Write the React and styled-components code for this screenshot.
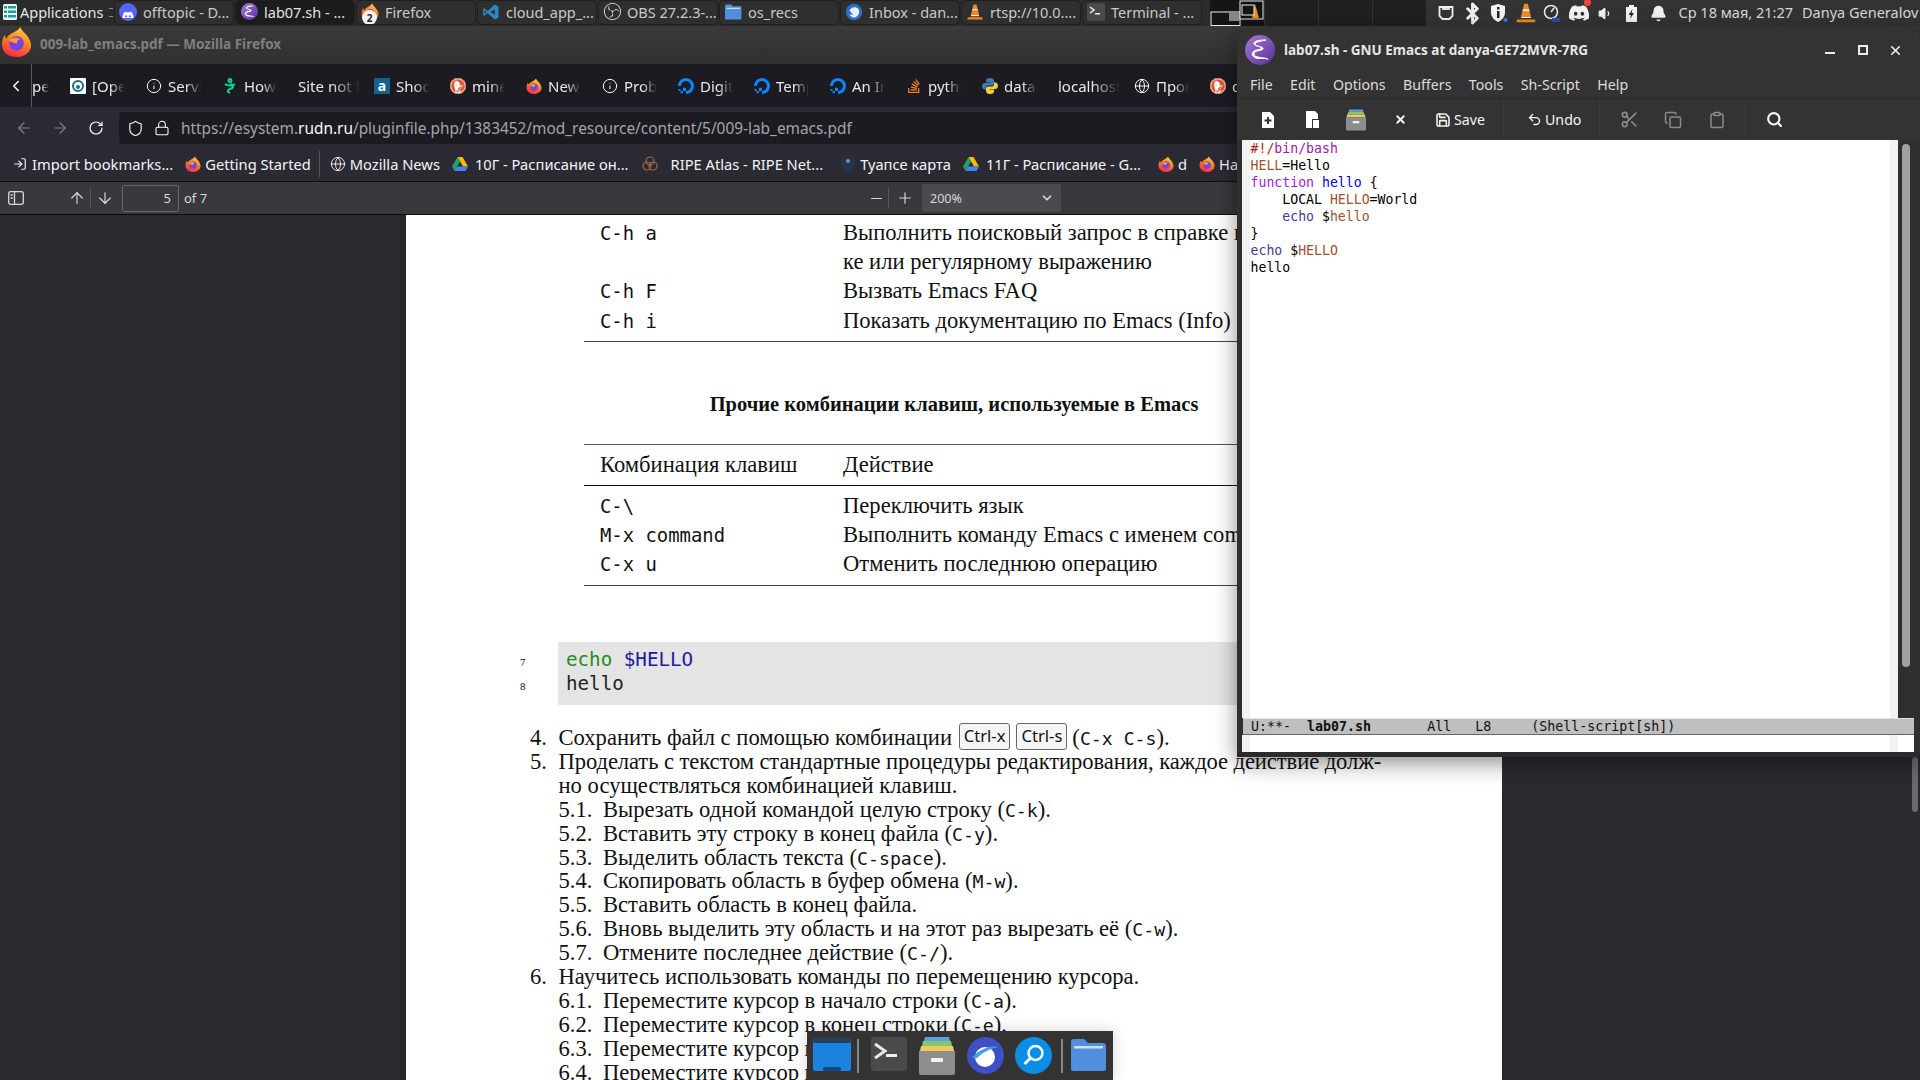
import React from "react";
import styled, { createGlobalStyle } from "styled-components";
import { Bluetooth, Bell, Volume1, Globe, Info, ArrowLeft, ArrowRight, RotateCw, Shield, Lock, ArrowUp, ArrowDown, Minus, Plus, ChevronDown, ChevronLeft, Undo2, Scissors, Copy, Clipboard, Search, X, Save, LogIn } from "lucide-react";
import { FaDiscord, FaStackOverflow } from "react-icons/fa";
import { SiObsstudio, SiDigitalocean, SiDuckduckgo } from "react-icons/si";

const GlobalStyle = createGlobalStyle`
  html, body { margin: 0; padding: 0; background: #2a2a2e; }
  body { font-family: "Noto Sans", sans-serif; overflow: hidden; }
  * { box-sizing: border-box; }
`;

const Screen = styled.div`
  position: relative; width: 1920px; height: 1080px; overflow: hidden;
  display: flex; flex-direction: column; background: #2a2a2e;
`;

/* ---------- top panel ---------- */
const Panel = styled.header`
  height: 26px; flex: none; display: flex; align-items: stretch; background: #2b2b2b; color: #e4e4e4;
`;
const AppMenu = styled.div`
  width: 114px; flex: none; display: flex; align-items: center; gap: 3px; padding: 0 0 2px 3px;
  font-size: 14.5px; white-space: nowrap; overflow: hidden;
`;
const MenuGrip = styled.span`
  width: 4px; height: 9px; margin-left: 3px; flex: none; border-top: 1px solid #888; border-bottom: 1px solid #888; position: relative;
`;
const TaskList = styled.div`
  display: flex; gap: 1px; width: 1090px; flex: none;
`;
const Task = styled.div`
  position: relative; width: 120px; height: 25px; flex: none; display: flex; align-items: center; gap: 6px; padding: 0 0 2px 4px;
  border-radius: 5px; border: 1px solid #1f1f1f; font-size: 14.5px; white-space: nowrap; overflow: hidden;
  background: ${p => (p.$active ? "#1c1c1c" : "#2f2f2f")}; color: ${p => (p.$active ? "#e4e4e4" : "#c9c9c9")};
`;
const TaskIcon = styled.span`
  width: 18px; height: 18px; flex: none; display: flex; align-items: center; justify-content: center;
`;
const Count = styled.span`
  position: absolute; left: 5px; top: 9px; width: 15px; height: 15px; border-radius: 50%;
  background: #f2f2f2; color: #222; font-size: 10px; font-weight: 700; display: flex; align-items: center; justify-content: center;
`;
const Pager = styled.div`
  width: 54px; flex: none; margin-left: 6px; background: #151515;
`;
const Desk = styled.div`
  width: 54px; flex: none; background: #202020; border-left: 1px solid #333;
`;
const Tray = styled.div`
  flex: 1; min-width: 0; background: #333; display: flex; align-items: center; padding-left: 7px; overflow: hidden; white-space: nowrap;
`;
const TrayIcon = styled.span`
  width: 26.5px; flex: none; height: 22px; display: flex; align-items: center; justify-content: center; color: #f0f0f0;
`;
const Clock = styled.span`
  font-size: 14.5px; color: #d8d8d8; margin-left: 7px; padding-bottom: 2px;
`;
const User = styled.span`
  font-size: 14.5px; color: #d8d8d8; margin-left: 9px; padding-bottom: 2px;
`;

/* ---------- firefox ---------- */
const Firefox = styled.main`
  flex: 1; min-height: 0; display: flex; flex-direction: column;
`;
const TitleBar = styled.div`
  position: relative; height: 38px; flex: none; background: linear-gradient(#3a3a3a, #303030);
  display: flex; align-items: center; padding-left: 40px;
  font-weight: 700; font-size: 13.5px; color: #7f7f7f; padding-bottom: 3px;
`;
const TitleLogo = styled.span`
  position: absolute; left: 1px; top: 0; width: 31px; height: 31px;
`;
const TabStrip = styled.div`
  height: 43px; flex: none; display: flex; background: #1c1b22; color: #fbfbfe; overflow: hidden;
`;
const TabBack = styled.div`
  width: 32px; flex: none; display: flex; align-items: center; justify-content: center; border-right: 1px solid #5a5a60; padding-left: 1px;
`;
const Tab = styled.div`
  flex: none; width: ${p => p.$w || 76}px; display: flex; align-items: center; gap: 6px; padding: 0 ${p => (p.$plain ? 6 : 13)}px 0 ${p => (p.$stub ? 0 : 8)}px; font-size: 15px; overflow: hidden;
`;
const TabLabel = styled.span`
  flex: 1; min-width: 0; overflow: hidden; white-space: nowrap; color: #e8e8ea;
  mask-image: linear-gradient(90deg, #000 55%, transparent 100%);
`;
const FavIcon = styled.span`
  width: 16px; height: 16px; flex: none; display: flex; align-items: center; justify-content: center;
`;
const SquareFav = styled.span`
  width: 16px; height: 16px; background: ${p => p.$bg}; color: ${p => p.$fg}; font-size: 14px; font-weight: 700; line-height: 15px; text-align: center; display: block;
`;
const NavBar = styled.div`
  height: 37px; flex: none; padding-top: 5px; background: #2b2a33; display: flex; align-items: center; color: #fbfbfe; border-top: 0;
`;
const NavButton = styled.span`
  width: 36px; height: 32px; flex: none; display: flex; align-items: center; justify-content: center; opacity: ${p => (p.$dim ? 0.4 : 1)};
`;
const NavGroup = styled.div`
  display: flex; padding-left: 6px; width: 119px; flex: none;
`;
const UrlField = styled.div`
  flex: 1; height: 32px; background: #1c1b22; border-radius: 4px 0 0 4px; display: flex; align-items: center; padding-left: 8px; gap: 10px;
`;
const Url = styled.span`
  font-size: 15.4px; color: #a4a4aa; white-space: nowrap; margin-left: 1px;
  b { color: #fbfbfe; font-weight: 400; }
`;
const BookmarkBar = styled.div`
  height: 38px; flex: none; background: #2b2a33; display: flex; align-items: center; padding: 3px 0 0 7px; overflow: hidden; white-space: nowrap;
  border-bottom: 1px solid #101014; color: #f4f4f6; font-size: 14.7px;
`;
const Bookmark = styled.span`
  display: flex; align-items: center; gap: ${p => p.$gap ?? 4}px; padding: 0 6px 0 ${p => p.$pl ?? 6}px; flex: none;
`;
const BookSep = styled.span`
  width: 1px; height: 26px; background: #55555a; margin: 0 4px 0 2px; flex: none;
`;
const PdfBar = styled.div`
  height: 33px; flex: none; background: #38383d; border-bottom: 1px solid #0c0c0d; display: flex; align-items: center; color: #d8d8da;
`;
const PdfButton = styled.span`
  width: ${p => p.$w || 24}px; height: 24px; flex: none; margin-left: ${p => p.$ml || 0}px; display: flex; align-items: center; justify-content: center;
`;
const PdfSep = styled.span`
  width: 1px; height: 20px; background: #55555a; flex: none;
`;
const PageInput = styled.div`
  width: 57px; height: 27px; border: 1px solid #67676b; background: #38383d; border-radius: 2px; font-size: 13px;
  display: flex; align-items: center; justify-content: flex-end; padding-right: 7px; margin-left: 3px; flex: none;
`;
const PageOf = styled.span`
  font-size: 13px; margin-left: 5px; flex: none; width: 680px;
`;
const Zoomer = styled.div`
  width: 139px; height: 28px; margin-left: 1px; background: #4a4a4f; border-radius: 2px; display: flex; align-items: center; justify-content: space-between;
  padding: 0 7px 0 8px; font-size: 12.5px; flex: none;
`;
const Viewer = styled.section`
  flex: 1; min-height: 0; display: flex; justify-content: flex-start; padding-left: 406px; overflow: hidden; background: #2a2a2e;
`;
const Page = styled.article`
  width: 1096px; height: 900px; background: #fff; padding-top: 3px; color: #111; flex: none;
  font-family: "Liberation Serif", serif; font-size: 22.6px; overflow: hidden;
`;
const DocTable = styled.div`
  margin: ${p => p.$mt || 0}px 0 0 178px; width: 760px;
  border-top: ${p => (p.$ruled ? "1.5px solid #555" : "0")};
  border-bottom: 1.5px solid #444; padding-bottom: 6px;
`;
const DocHead = styled.div`
  display: grid; grid-template-columns: 243px 1fr; height: 41px; align-items: center; padding-left: 16px; border-bottom: 1px solid #111; margin-bottom: 5px;
  white-space: nowrap;
`;
const DocRow = styled.div`
  display: grid; grid-template-columns: 243px 1fr; height: 29.3px; align-items: center; padding-left: 16px; white-space: nowrap;
`;
const Mono = styled.span`
  font-family: "DejaVu Sans Mono", monospace; font-size: ${p => p.$s || 18.9}px; white-space: pre;
`;
const DocHeading = styled.h3`
  margin: 47px 0 0; font-size: 20.5px; font-weight: 700; text-align: center; height: 30px; line-height: 30px;
`;
const CodeRow = styled.div`
  display: flex; margin: 56px 0 0 112px;
`;
const LineNums = styled.div`
  width: 40px; padding-top: 8px; padding-left: 2px; font-size: 11px; line-height: 24px;
`;
const CodeBlock = styled.pre`
  margin: 0; width: 800px; height: 63px; background: #e4e4e4; padding: 6px 8px; font-family: "DejaVu Sans Mono", monospace; font-size: 19.2px; line-height: 24px;
  color: #222;
`;
const CodeKey = styled.span` color: ${p => p.$c}; `;
const List = styled.div`
  margin: 21px 0 0 124px; line-height: 23.9px;
`;
const Item = styled.div`
  display: flex; height: 23.9px; white-space: nowrap; padding-left: ${p => (p.$sub ? 28.5 : 0)}px;
  letter-spacing: ${p => p.$ls || 0}px;
`;
const Num = styled.span`
  flex: none; width: ${p => (p.$sub ? 44.5 : 28.5)}px;
`;
const Kbd = styled.kbd`
  display: inline-block; height: 27px; line-height: 23px; margin: -3px 5px -3px 1px; padding: 0 4px; border: 1px solid #666; border-radius: 3px; background: #f6f6f6;
  font-family: "Noto Sans", sans-serif; font-size: 16.6px; vertical-align: top;
`;
const PageBar = styled.span`
  position: absolute; left: 1912px; top: 757px; width: 6px; height: 55px; border-radius: 3px; background: #6a6a6e;
`;

/* ---------- emacs ---------- */
const Emacs = styled.section`
  position: absolute; left: 1237px; top: 28px; width: 683px; height: 729px; background: #2f2f2f; border-radius: 11px 11px 0 0;
  box-shadow: 0 6px 22px rgba(0,0,0,.45); display: flex; flex-direction: column; overflow: hidden;
`;
const EmacsTitle = styled.div`
  height: 44px; flex: none; background: #333; display: flex; align-items: center; padding: 0 0 0 8px; color: #e6e6e6; font-weight: 700; font-size: 13.5px;
`;
const EmacsName = styled.span`
  margin-left: 9px; flex: 1; white-space: nowrap;
`;
const WinButton = styled.span`
  width: 33px; display: flex; justify-content: center; align-items: center; color: #eee;
`;
const EmacsMenu = styled.nav`
  height: 27px; flex: none; background: #333; display: flex; align-items: center; gap: 17.4px; padding: 0 0 2px 13px; font-size: 14.2px; color: #dcdcdc; border-bottom: 1px solid #2b2b2b;
`;
const EmacsTools = styled.div`
  height: 41px; flex: none; background: #333; display: flex; align-items: center; padding-left: 9px; color: #f4f4f4; font-size: 14.2px;
`;
const Tool = styled.span`
  width: 44px; flex: none; margin-left: ${p => p.$ml || 0}px; display: flex; justify-content: center; align-items: center; color: ${p => (p.$off ? "#8c8c8c" : "#f4f4f4")};
`;
const TextTool = styled.span`
  flex: none; display: flex; align-items: center; gap: 3px; width: ${p => p.$w}px; padding-left: ${p => p.$pl}px;
`;
const ToolSep = styled.span`
  width: 1px; height: 36px; background: #3c3c3c; flex: none; margin-left: ${p => p.$ml || 0}px;
`;
const EmacsBody = styled.div`
  flex: 1; min-height: 0; display: flex; margin-left: 5px;
`;
const Fringe = styled.div`
  width: 8px; flex: none; background: #f2f2f2; margin-right: ${p => p.$mr || 0}px;
`;
const Buffer = styled.pre`
  flex: 1; min-width: 0; margin: 0; background: #fff; color: #000; font-family: "DejaVu Sans Mono", monospace; font-size: 13.2px; line-height: 17px; padding-left: 0.5px;
`;
const ScrollTrack = styled.div`
  width: 16px; flex: none; background: #2f2f2f; padding: 4px 4px 0;
`;
const ScrollThumb = styled.div`
  width: 8px; height: 523px; background: #a0a0a0; border-radius: 4px;
`;
const SpacerEdge = styled.div`
  width: ${p => p.$w || 6}px; flex: none; background: ${p => p.$bg || "#2f2f2f"};
`;
const ModeLine = styled.pre`
  height: 17px; flex: none; margin: 0 6px 0 6px; padding-left: 8px; background: #bfbfbf; border-top: 1px solid #e0e0e0; border-bottom: 1px solid #666;
  font-family: "DejaVu Sans Mono", monospace; font-size: 13.3px; line-height: 15px; color: #111;
  b { font-weight: 700; }
`;
const EchoArea = styled.div`
  height: 17px; flex: none; margin: 0 6px 0 5px; background: #fff; display: flex; justify-content: space-between;
`;
const EmacsFoot = styled.div`
  height: 5px; flex: none; background: #2b2b2b;
`;

/* ---------- dock ---------- */
const Dock = styled.nav`
  position: absolute; left: 807px; top: 1031px; width: 306px; height: 49px; background: #333; display: flex; align-items: center; padding: 0 7px 0 6px;
  box-shadow: 0 0 14px rgba(0,0,0,.18);
`;
const DockSep = styled.span`
  width: 2px; height: 34px; background: #8a8a8a; flex: none; margin: 0 ${p => p.$r}px 0 ${p => p.$l}px;
`;
const DockItem = styled.span`
  display: block; height: 38px; flex: none; width: ${p => p.$w || 36}px; margin-right: ${p => p.$mr || 0}px;
`;

/* ---------- drawings ---------- */
const FirefoxIcon = ({ size = 16 }) => (
  <svg width={size} height={size} viewBox="0 0 32 32">
    <defs>
      <linearGradient id="ffg" x1="0.7" y1="0" x2="0.3" y2="1"><stop offset="0" stopColor="#ffd43a" /><stop offset=".5" stopColor="#ff7a1f" /><stop offset="1" stopColor="#f2294f" /></linearGradient>
    </defs>
    <path d="M20 1c1 4 5 6 7 9 3 4 4 7 4 10 0 7-7 12-15 12S1 27 1 19c0-4 1-7 3-10 0 2 1 3 2 4 1-4 5-5 8-7 2-1 5-3 6-5z" fill="url(#ffg)" />
    <circle cx="16" cy="18" r="7.5" fill="#7542e5" />
    <path d="M8 15c3-3 9-4 12-1-3 0-4 2-3 4-3 0-6-1-9-3z" fill="#ff9a2a" />
  </svg>
);
const EmacsIcon = ({ size = 30 }) => (
  <svg width={size} height={size} viewBox="0 0 30 30">
    <defs><linearGradient id="emg" x1="0" y1="0" x2="1" y2="1"><stop offset="0" stopColor="#a57ad8" /><stop offset="1" stopColor="#5a2f96" /></linearGradient></defs>
    <circle cx="15" cy="15" r="15" fill="url(#emg)" />
    <path d="M21 5c-5 1-11 2-11 4 0 3 9 2 8 5-1 2-9 1-9 5 0 4 9 3 14 5-4-1-10 0-12-1-3-1-5-4-3-6 2-3 9-2 8-4 0-2-8-2-7-5 1-3 8-3 12-3z" fill="#fff" stroke="#fff" strokeWidth="1" />
  </svg>
);
const VsCode = () => (
  <svg width="18" height="18" viewBox="0 0 24 24"><path d="M17 2l5 2.5v15L17 22 7.5 13.5 3 17l-1.500-1V8L3 7l4.500 3.500L17 2zm0 6l-5.500 4 5.500 4V8zM3.500 9.500v5L6 12 3.500 9.500z" fill="#2a87c8" /></svg>
);
const FolderIcon = ({ w = 18, h = 16 }) => (
  <svg width={w} height={h} viewBox="0 0 38 34"><path d="M2 4a3 3 0 013-3h10l4 4h15a3 3 0 013 3v23a2 2 0 01-2 2H4a2 2 0 01-2-2z" fill="#518fde" /><rect x="5" y="8" width="29" height="2.500" fill="#cfe0f5" /></svg>
);
const Thunderbird = () => (
  <svg width="18" height="18" viewBox="0 0 24 24"><circle cx="12" cy="12" r="11" fill="#2a6fc4" /><path d="M6 10c2-5 9-6 12-2 2 3 1 9-4 11-4 1-7-1-8-4l5 1-5-6z" fill="#e8eef7" /></svg>
);
const Vlc = ({ size = 18 }) => (
  <svg width={size} height={size} viewBox="0 0 24 24"><path d="M10 2h4l1.500 6h-7zM8 10h8l1.500 6h-11z" fill="#f58a14" /><path d="M8.500 8h7l.5 2H8zM7 16h10l.4 1.500H6.600z" fill="#f3f3f3" /><path d="M3 19h18a1 1 0 011 1v2H2v-2a1 1 0 011-1z" fill="#f58a14" /></svg>
);
const TermTile = () => (
  <svg width="18" height="18" viewBox="0 0 18 18"><rect width="18" height="18" rx="2" fill="#4a4a4a" /><path d="M3 4l4 3-4 3" stroke="#eee" fill="none" strokeWidth="1.500" /><rect x="8" y="10" width="5" height="1.500" fill="#eee" /></svg>
);
const Drive = () => (
  <svg width="16" height="15" viewBox="0 0 16 15"><path d="M5.500 0h5L16 9.500h-5z" fill="#fbbc04" /><path d="M5.500 0L0 9.500 2.500 14 8 4.500z" fill="#1fa463" /><path d="M2.500 14h11l2.500-4.500H5z" fill="#4285f4" /></svg>
);
const Python = () => (
  <svg width="16" height="16" viewBox="0 0 16 16"><path d="M8 0C5 0 4 1 4 3v1.500h4.500V5H3C1 5 0 6.500 0 8s1 3.500 2.500 3.500H4V9.500C4 8.500 5 7.500 6 7.500h4c1 0 2-1 2-2V3c0-2-1.500-3-4-3z" fill="#3f7cb4" /><path d="M8 16c3 0 4-1 4-3v-1.500H7.500V11H13c2 0 3-1.500 3-3s-1-3.500-2.500-3.500H12v2c0 1-1 2-2 2H6c-1 0-2 1-2 2V13c0 2 1.500 3 4 3z" fill="#f7cf3e" /></svg>
);
const Ripe = () => (
  <svg width="18" height="18" viewBox="0 0 18 18" fill="none" stroke="#9a6a50" strokeWidth="1.200"><circle cx="9" cy="6" r="4" /><circle cx="6" cy="11" r="4" /><circle cx="12" cy="11" r="4" /></svg>
);
const Pin = () => (
  <svg width="16" height="18" viewBox="0 0 16 18"><path d="M8 1a7 8 0 100 16A7 8 0 008 1z" fill="#25344a" /><circle cx="8" cy="6" r="2" fill="#6f8fb5" /></svg>
);
const Ddg = () => (
  <span style={{ display: "flex", background: "#fff", borderRadius: "50%" }}><SiDuckduckgo size={16} color="#de5833" /></span>
);
const PagerArt = () => (
  <svg width="54" height="26" viewBox="0 0 54 26"><rect x="1" y="12" width="29" height="13.500" fill="#151515" stroke="#eee" /><rect x="19" y="11" width="10" height="10" fill="#888" /><rect x="30" y="1" width="23" height="18" fill="#111" stroke="#eee" /><path d="M45 4l4 14h-7z" fill="#f58a14" /><rect x="32" y="5" width="12" height="10" fill="#151515" stroke="#eee" /></svg>
);
const AppsIcon = () => (
  <svg width="14" height="16" viewBox="0 0 14 16"><rect width="14" height="16" rx="1.500" fill="#e8f4f4" /><rect x="1" y="2" width="3" height="2.500" fill="#19a29a" /><rect x="5" y="2" width="8" height="2.500" fill="#19a29a" /><rect x="1" y="6.500" width="3" height="2.500" fill="#19a29a" /><rect x="5" y="6.500" width="8" height="2.500" fill="#19a29a" /><rect x="1" y="11" width="3" height="2.500" fill="#19a29a" /><rect x="5" y="11" width="8" height="2.500" fill="#19a29a" /></svg>
);
const NewFile = () => (
  <svg width="14" height="18" viewBox="0 0 14 18"><path d="M1 1h8l4 4v12H1z" fill="#fff" /><path d="M7 6v7M3.500 9.500h7" stroke="#333" strokeWidth="2" /></svg>
);
const OpenFile = () => (
  <svg width="15" height="19" viewBox="0 0 15 19"><path d="M1 1h9l3 3v5H7v9H1z" fill="#fff" /><path d="M8 10h6v8H8z" fill="#fff" /></svg>
);
const Cabinet = ({ w = 20, h = 26 }) => (
  <svg width={w} height={h} viewBox="0 0 36 38"><path d="M6 0h24l1 4H5z" fill="#5f9fe0" /><path d="M4 4h28l1 5H3z" fill="#80c870" /><path d="M2 9h32l1 5H1z" fill="#f3c85c" /><path d="M0 14h36v22a2 2 0 01-2 2H2a2 2 0 01-2-2z" fill="#8e8e8e" /><rect x="12" y="21" width="12" height="4" rx="1" fill="#f2f2f2" /></svg>
);
const TrayNet = () => (
  <svg width="16" height="16" viewBox="0 0 16 16" fill="none" stroke="#f0f0f0" strokeWidth="1.800"><path d="M1.500 2h13v9l-3 3h-7l-3-3z" /><path d="M4 4h8" /></svg>
);
const ShieldInfo = () => (
  <svg width="18" height="20" viewBox="0 0 18 20"><path d="M8 1l7 2v6c0 5-3 8-7 10-4-2-7-5-7-10V3z" fill="#f5f5f5" /><rect x="7" y="4" width="2.500" height="2.500" fill="#222" /><rect x="7" y="8" width="2.500" height="7" fill="#222" /><circle cx="15.500" cy="17" r="2" fill="#2f7fe6" /></svg>
);
const RecIcon = () => (
  <svg width="18" height="20" viewBox="0 0 18 20" fill="none"><circle cx="8" cy="9" r="6.500" stroke="#e8e8e8" strokeWidth="1.600" /><path d="M8 9l3-4" stroke="#e8e8e8" strokeWidth="1.500" /><path d="M9 15h8v4H9z" fill="#2d50a5" /></svg>
);
const DiscordTray = () => (
  <span style={{ position: "relative", display: "flex" }}>
    <FaDiscord size={22} color="#f2f2f2" />
    <svg width="7" height="7" style={{ position: "absolute", right: -1, top: -3 }}><circle cx="3.500" cy="3.500" r="3.500" fill="#ef4444" /></svg>
  </span>
);
const BatteryBolt = () => (
  <svg width="11" height="17" viewBox="0 0 11 17"><path d="M3 0h5v2h3v15H0V2h3z" fill="#f3f3f3" /><path d="M6.500 4L2.500 10h2.500l-1 4 4-6H5.500z" fill="#222" /></svg>
);
const Sidebar = () => (
  <svg width="16" height="16" viewBox="0 0 16 16" fill="none" stroke="#d8d8da" strokeWidth="1.300"><rect x=".7" y="1.700" width="14.600" height="12.600" rx="2" /><path d="M6.500 2v12M2.500 5h2.300M2.500 8h2.300" /></svg>
);
const MinGlyph = () => <svg width="10" height="10"><rect y="7" width="10" height="2" fill="#eee" /></svg>;
const MaxGlyph = () => <svg width="10" height="10"><rect x="1" y="1" width="8" height="8" fill="none" stroke="#eee" strokeWidth="2" /></svg>;
const DockDesktop = () => (
  <svg width="38" height="36" viewBox="0 0 38 36"><rect y="1" width="38" height="33" rx="2" fill="#1b82e0" /><rect y="1" width="38" height="5" rx="2" fill="#25405e" /><rect x="10" y="30" width="18" height="4" rx="1" fill="#104a80" /></svg>
);
const DockTerm = () => (
  <svg width="36" height="34" viewBox="0 0 36 34"><rect width="36" height="34" rx="3" fill="#4a4a4a" /><path d="M4 7l10 7-10 7" stroke="#e8e8e8" fill="none" strokeWidth="3" /><rect x="15" y="17" width="11" height="3" fill="#eee" /></svg>
);
const DockPlanet = () => (
  <svg width="37" height="37" viewBox="0 0 37 37"><circle cx="18.500" cy="18.500" r="18.500" fill="#3f4fc6" /><circle cx="18" cy="20" r="10" fill="#fff" /><path d="M5 21c6-8 18-13 27-11-8 1-17 6-22 11z" fill="#3fa0ea" /></svg>
);
const DockSearch = () => (
  <svg width="37" height="37" viewBox="0 0 37 37"><circle cx="18.500" cy="18.500" r="18.500" fill="#0a8ee8" /><circle cx="20.500" cy="16" r="7" fill="none" stroke="#fff" strokeWidth="2.500" /><path d="M15.500 21l-6 6" stroke="#fff" strokeWidth="3" /></svg>
);

const tasks = [
  { l: "offtopic - D...", i: <svg width="18" height="18"><circle cx="9" cy="9" r="9" fill="#5865f2" /><foreignObject x="3" y="3" width="12" height="12"><FaDiscord size={12} color="#fff" /></foreignObject></svg> },
  { l: "lab07.sh - ...", i: <EmacsIcon size={17} />, active: true },
  { l: "Firefox", i: <FirefoxIcon size={18} />, count: 2 },
  { l: "cloud_app_...", i: <VsCode /> },
  { l: "OBS 27.2.3-...", i: <SiObsstudio size={17} color="#eee" /> },
  { l: "os_recs", i: <FolderIcon /> },
  { l: "Inbox - dan...", i: <Thunderbird /> },
  { l: "rtsp://10.0....", i: <Vlc /> },
  { l: "Terminal - ...", i: <TermTile /> },
];

const tabsData = [
  { l: "[Open", i: <span style={{ display: "flex", background: "#fff", borderRadius: 1, width: 16, height: 16, alignItems: "center", justifyContent: "center" }}><svg width="12" height="14" viewBox="0 0 12 14"><circle cx="6" cy="7" r="5" fill="none" stroke="#1e6a90" strokeWidth="2" /><circle cx="6" cy="8" r="2" fill="#1e6a90" /></svg></span> },
  { l: "Service", i: <Info size={16} strokeWidth={1.5} /> },
  { l: "How to", i: <svg width="14" height="16" viewBox="0 0 14 16" fill="none" stroke="#12d18e" strokeWidth="2"><circle cx="7" cy="2.500" r="1.500" /><path d="M2 6c2 2 8 2 10 0M7 6c4 1 4 4 0 5-3 1-3 3 0 4" /></svg> },
  { l: "Site not found" },
  { l: "Shodan", i: <SquareFav $bg="#14638f" $fg="#fff">a</SquareFav> },
  { l: "mine", i: <Ddg /> },
  { l: "New Tab", i: <FirefoxIcon /> },
  { l: "Problem", i: <Info size={16} strokeWidth={1.5} /> },
  { l: "Digital", i: <SiDigitalocean size={16} color="#0a84ff" /> },
  { l: "Template", i: <SiDigitalocean size={16} color="#0a84ff" /> },
  { l: "An Intro", i: <SiDigitalocean size={16} color="#0a84ff" /> },
  { l: "python", i: <FaStackOverflow size={16} color="#f48024" /> },
  { l: "datacamp", i: <Python /> },
  { l: "localhost:8888" },
  { l: "Проверка", i: <Globe size={16} strokeWidth={1.5} /> },
  { l: "duck", i: <Ddg /> },
];

const M = ({ children }) => <Mono $s={18.2}>{children}</Mono>;

const subs5 = [
  ["5.1.", <>Вырезать одной командой целую строку (<M>C-k</M>).</>],
  ["5.2.", <>Вставить эту строку в конец файла (<M>C-y</M>).</>],
  ["5.3.", <>Выделить область текста (<M>C-space</M>).</>],
  ["5.4.", <>Скопировать область в буфер обмена (<M>M-w</M>).</>],
  ["5.5.", <>Вставить область в конец файла.</>],
  ["5.6.", <>Вновь выделить эту область и на этот раз вырезать её (<M>C-w</M>).</>],
  ["5.7.", <>Отмените последнее действие (<M>C-/</M>).</>],
];
const subs6 = [
  ["6.1.", <>Переместите курсор в начало строки (<M>C-a</M>).</>],
  ["6.2.", <>Переместите курсор в конец строки (<M>C-e</M>).</>],
  ["6.3.", <>Переместите курсор в начало буфера (<M>M-&lt;</M>).</>],
  ["6.4.", <>Переместите курсор в конец буфера (<M>M-&gt;</M>).</>],
];

export default function App() {
  return (
    <Screen>
      <GlobalStyle />
      <Panel>
        <AppMenu><AppsIcon />Applications<MenuGrip /></AppMenu>
        <TaskList>
          {tasks.map(t => (
            <Task key={t.l} $active={t.active}>
              <TaskIcon>{t.i}</TaskIcon>
              {t.count && <Count>{t.count}</Count>}
              {t.l}
            </Task>
          ))}
        </TaskList>
        <Pager><PagerArt /></Pager>
        <Desk /><Desk /><Desk />
        <Tray>
          <TrayIcon><TrayNet /></TrayIcon>
          <TrayIcon><Bluetooth size={23} strokeWidth={3} /></TrayIcon>
          <TrayIcon><ShieldInfo /></TrayIcon>
          <TrayIcon><Vlc size={22} /></TrayIcon>
          <TrayIcon><RecIcon /></TrayIcon>
          <TrayIcon><DiscordTray /></TrayIcon>
          <TrayIcon><Volume1 size={15} fill="#f0f0f0" /></TrayIcon>
          <TrayIcon><BatteryBolt /></TrayIcon>
          <TrayIcon><Bell size={17} fill="#f0f0f0" /></TrayIcon>
          <Clock>Ср 18 мая, 21:27</Clock>
          <User>Danya Generalov</User>
        </Tray>
      </Panel>

      <Firefox>
        <TitleBar>
          <TitleLogo><FirefoxIcon size={31} /></TitleLogo>
          009-lab_emacs.pdf — Mozilla Firefox
        </TitleBar>
        <TabStrip>
          <TabBack><ChevronLeft size={18} /></TabBack>
          <Tab $w={30} $stub><TabLabel>per</TabLabel></Tab>
          {tabsData.map(t => (
            <Tab key={t.l} $plain={!t.i}>
              {t.i && <FavIcon>{t.i}</FavIcon>}
              <TabLabel>{t.l}</TabLabel>
            </Tab>
          ))}
        </TabStrip>
        <NavBar>
          <NavGroup>
            <NavButton $dim><ArrowLeft size={18} strokeWidth={1.5} /></NavButton>
            <NavButton $dim><ArrowRight size={18} strokeWidth={1.5} /></NavButton>
            <NavButton><RotateCw size={16} strokeWidth={1.8} /></NavButton>
          </NavGroup>
          <UrlField>
            <Shield size={17} strokeWidth={1.6} />
            <Lock size={16} strokeWidth={1.6} />
            <Url>https://esystem.<b>rudn.ru</b>/pluginfile.php/1383452/mod_resource/content/5/009-lab_emacs.pdf</Url>
          </UrlField>
        </NavBar>
        <BookmarkBar>
          <Bookmark $gap={5}><LogIn size={14} />Import bookmarks...</Bookmark>
          <Bookmark><FirefoxIcon />Getting Started</Bookmark>
          <BookSep />
          <Bookmark><Globe size={16} strokeWidth={1.4} />Mozilla News</Bookmark>
          <Bookmark $gap={7}><Drive />10Г - Расписание он...</Bookmark>
          <Bookmark $gap={12}><Ripe />RIPE Atlas - RIPE Net...</Bookmark>
          <Bookmark $pl={11}><Pin />Туапсе карта</Bookmark>
          <Bookmark $gap={7}><Drive />11Г - Расписание - G...</Bookmark>
          <Bookmark $pl={11}><FirefoxIcon />d</Bookmark>
          <Bookmark><FirefoxIcon />Ha</Bookmark>
        </BookmarkBar>
        <PdfBar>
          <PdfButton $w={32}><Sidebar /></PdfButton>
          <PdfButton $w={26} $ml={32}><ArrowUp size={18} strokeWidth={1.6} /></PdfButton>
          <PdfSep />
          <PdfButton $w={28}><ArrowDown size={18} strokeWidth={1.6} /></PdfButton>
          <PageInput>5</PageInput>
          <PageOf>of 7</PageOf>
          <PdfButton><Minus size={17} strokeWidth={1.6} /></PdfButton>
          <PdfSep />
          <PdfButton $w={32}><Plus size={18} strokeWidth={1.6} /></PdfButton>
          <Zoomer>200%<ChevronDown size={14} strokeWidth={3} /></Zoomer>
        </PdfBar>
        <Viewer>
          <Page>
            <DocTable>
              <DocRow><Mono>C-h a</Mono><span>Выполнить поисковый запрос в справке по ключевому сло-</span></DocRow>
              <DocRow><span /><span>ке или регулярному выражению</span></DocRow>
              <DocRow><Mono>C-h F</Mono><span>Вызвать Emacs FAQ</span></DocRow>
              <DocRow><Mono>C-h i</Mono><span>Показать документацию по Emacs (Info)</span></DocRow>
            </DocTable>
            <DocHeading>Прочие комбинации клавиш, используемые в Emacs</DocHeading>
            <DocTable $ruled $mt={25}>
              <DocHead><span>Комбинация клавиш</span><span>Действие</span></DocHead>
              <DocRow><Mono>C-\</Mono><span>Переключить язык</span></DocRow>
              <DocRow><Mono>M-x command</Mono><span>Выполнить команду Emacs с именем command</span></DocRow>
              <DocRow><Mono>C-x u</Mono><span>Отменить последнюю операцию</span></DocRow>
            </DocTable>
            <CodeRow>
              <LineNums>7<br />8</LineNums>
              <CodeBlock><CodeKey $c="#1f8a1f">echo</CodeKey> <CodeKey $c="#1c1c9c">$HELLO</CodeKey>{"\n"}hello</CodeBlock>
            </CodeRow>
            <List>
              <Item><Num>4.</Num><span>Сохранить файл с помощью комбинации <Kbd>Ctrl-x</Kbd><Kbd>Ctrl-s</Kbd>(<M>C-x C-s</M>).</span></Item>
              <Item $ls={-0.09}><Num>5.</Num><span>Проделать с текстом стандартные процедуры редактирования, каждое действие долж-</span></Item>
              <Item><Num /><span>но осуществляться комбинацией клавиш.</span></Item>
              {subs5.map(([n, t]) => <Item $sub key={n}><Num $sub>{n}</Num><span>{t}</span></Item>)}
              <Item><Num>6.</Num><span>Научитесь использовать команды по перемещению курсора.</span></Item>
              {subs6.map(([n, t]) => <Item $sub key={n}><Num $sub>{n}</Num><span>{t}</span></Item>)}
            </List>
          </Page>
        </Viewer>
      </Firefox>
      <PageBar />

      <Emacs>
        <EmacsTitle>
          <EmacsIcon />
          <EmacsName>lab07.sh - GNU Emacs at danya-GE72MVR-7RG</EmacsName>
          <WinButton><MinGlyph /></WinButton>
          <WinButton><MaxGlyph /></WinButton>
          <WinButton><X size={15} strokeWidth={2.5} /></WinButton>
          <SpacerEdge $w={8} $bg="#333" />
        </EmacsTitle>
        <EmacsMenu>
          {["File", "Edit", "Options", "Buffers", "Tools", "Sh-Script", "Help"].map(m => <span key={m}>{m}</span>)}
        </EmacsMenu>
        <EmacsTools>
          <Tool><NewFile /></Tool>
          <Tool><OpenFile /></Tool>
          <Tool><Cabinet /></Tool>
          <Tool><X size={13} strokeWidth={3.5} /></Tool>
          <TextTool $w={81} $pl={13}><Save size={16} strokeWidth={2.4} />Save</TextTool>
          <ToolSep />
          <TextTool $w={95} $pl={23}><Undo2 size={15} strokeWidth={2.2} />Undo</TextTool>
          <ToolSep />
          <Tool $off $ml={7}><Scissors size={19} /></Tool>
          <Tool $off><Copy size={18} /></Tool>
          <Tool $off><Clipboard size={18} /></Tool>
          <ToolSep $ml={6} />
          <Tool $ml={6}><Search size={17} strokeWidth={3} /></Tool>
        </EmacsTools>
        <EmacsBody>
          <Fringe />
          <Buffer>
            <CodeKey $c="#b22222">#!/</CodeKey><CodeKey $c="#a020a0">bin/bash</CodeKey>{"\n"}
            <CodeKey $c="#a0522d">HELL</CodeKey>=Hello{"\n"}
            <CodeKey $c="#a020f0">function</CodeKey> <CodeKey $c="#0000ff">hello</CodeKey> {"{"}{"\n"}
            {"    "}LOCAL <CodeKey $c="#a0522d">HELLO</CodeKey>=World{"\n"}
            {"    "}<CodeKey $c="#483d8b">echo</CodeKey> $<CodeKey $c="#a0522d">hello</CodeKey>{"\n"}
            {"}"}{"\n"}
            <CodeKey $c="#483d8b">echo</CodeKey> $<CodeKey $c="#a0522d">HELLO</CodeKey>{"\n"}
            hello
          </Buffer>
          <Fringe />
          <ScrollTrack><ScrollThumb /></ScrollTrack>
          <SpacerEdge />
        </EmacsBody>
        <ModeLine>{"U:**-  "}<b>lab07.sh</b>{"       All   L8     (Shell-script[sh])"}</ModeLine>
        <EchoArea><Fringe /><Fringe $mr={16} /></EchoArea>
        <EmacsFoot />
      </Emacs>

      <Dock>
        <DockItem $w={38}><DockDesktop /></DockItem>
        <DockSep $l={6} $r={12} />
        <DockItem $mr={12}><DockTerm /></DockItem>
        <DockItem $mr={12}><Cabinet w={36} h={38} /></DockItem>
        <DockItem $w={37} $mr={11}><DockPlanet /></DockItem>
        <DockItem $w={37}><DockSearch /></DockItem>
        <DockSep $l={9} $r={6} />
        <DockItem $w={38}><FolderIcon w={38} h={36} /></DockItem>
      </Dock>
    </Screen>
  );
}
